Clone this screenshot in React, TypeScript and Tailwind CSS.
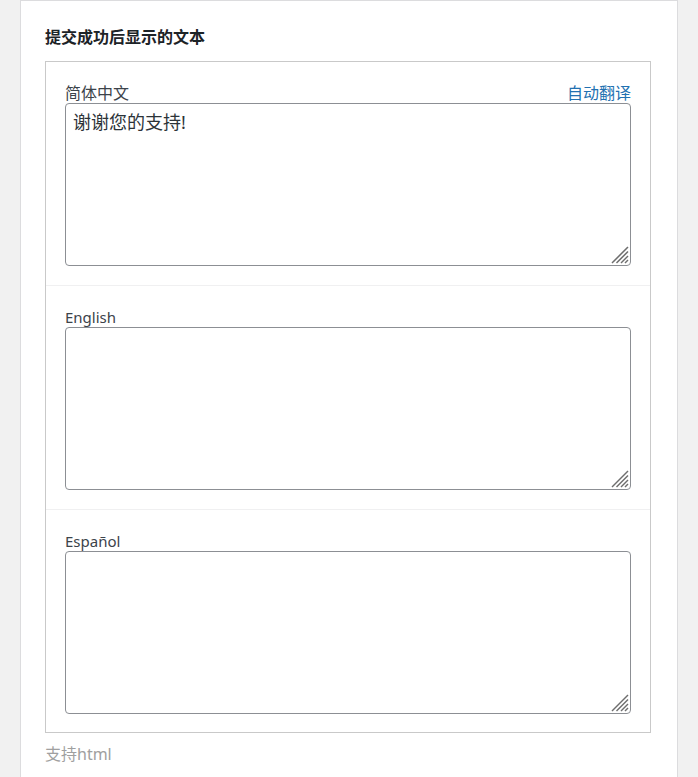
import type { FC } from 'react';

const langs = [
  { label: '简体中文', value: '谢谢您的支持!', translate: true, cjk: true },
  { label: 'English', value: '', translate: false, cjk: false },
  { label: 'Español', value: '', translate: false, cjk: false },
];

const font = 'font-["Segoe_UI","Noto_Sans","Noto_Sans_CJK_SC",sans-serif]';

const Grip: FC = () => (
  <svg
    className="absolute right-[2px] bottom-[2px] pointer-events-none"
    width="18"
    height="18"
    viewBox="0 0 18 18"
  >
    <g stroke="#6e6e6e" strokeWidth="1.5">
      <line x1="17" y1="1" x2="1" y2="17" />
      <line x1="17" y1="5.5" x2="5.5" y2="17" />
      <line x1="17" y1="10" x2="10" y2="17" />
      <line x1="17" y1="14" x2="14" y2="17" />
    </g>
  </svg>
);

const App: FC = () => {
  return (
    <div className={`min-h-[777px] bg-[#f1f1f1] px-[20px] ${font}`}>
      <div className="min-h-[777px] bg-white border-x border-t border-[#dcdcde] pl-[24px] pt-[25px]">
        <h2 className="text-[16px] leading-[22px] font-bold text-[#1d2327] mb-[13px]">提交成功后显示的文本</h2>

        <div className="w-[606px] border border-[#c9c9c9]">
          {langs.map((l, i) => (
            <div
              key={l.label}
              className={`px-[19px] pt-[21px] ${i < 2 ? 'pb-[19px] border-b border-[#f0f0f1]' : 'pb-[18px]'}`}
            >
              <div className="flex items-end justify-between h-[20px] leading-[20px]">
                <span className={`text-[#3c434a] ${l.cjk ? 'text-[16px]' : 'text-[15px]'}`}>{l.label}</span>
                {l.translate && <a className="text-[16px] text-[#2271b1] cursor-pointer">自动翻译</a>}
              </div>
              <div className="relative">
                <textarea
                  defaultValue={l.value}
                  className="block w-full h-[163px] resize-none border border-[#8c8f94] rounded-[4px] px-[7px] py-[6px] text-[18px] leading-[24px] text-[#2c3338] outline-none"
                />
                <Grip />
              </div>
            </div>
          ))}
        </div>

        <p className="mt-[11px] text-[16px] leading-[20px] text-[#a0a0a0]">支持html</p>
      </div>
    </div>
  );
};

export default App;
